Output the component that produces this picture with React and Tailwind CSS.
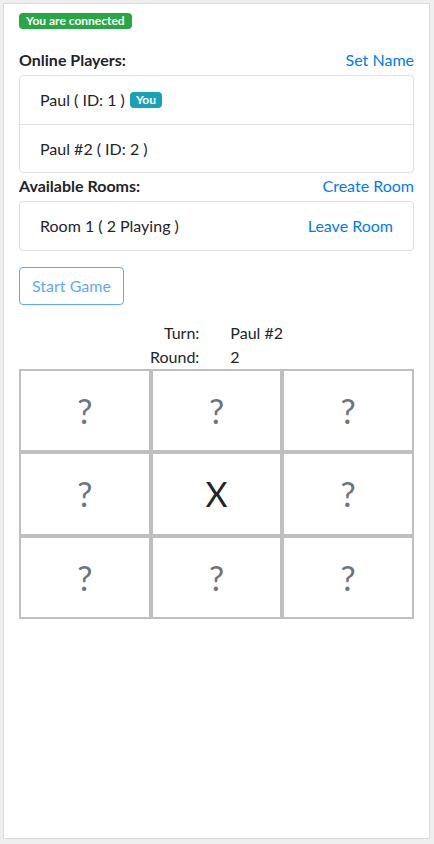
import React from 'react'

const players = [
  { name: 'Paul', id: 1, you: true },
  { name: 'Paul #2', id: 2, you: false },
]

const board = ['?', '?', '?', '?', 'X', '?', '?', '?', '?']

export default function App() {
  return (
    <div
      className="h-screen bg-[#efefef] pt-[3px] pl-[3px] pr-[4px] pb-[5px] text-[#212529] text-[16px]"
      style={{ fontFamily: 'Lato, "Noto Sans", sans-serif' }}
    >
      <div className="h-full bg-white border border-[#dcdcdc] px-[15px] pt-[9px]">
        {/* Status */}
        <div className="w-fit h-[16px] flex items-center bg-[#28a745] text-white text-[12px] font-bold leading-none px-[7px] rounded-[4px]">
          You are connected
        </div>

        {/* Players */}
        <div className="mt-[19px] flex justify-between h-[27px] leading-[24px]">
          <span className="font-bold">Online Players:</span>
          <a className="text-[#007bff] cursor-pointer">Set Name</a>
        </div>
        <div className="border border-[#dfdfdf] rounded-[4px]">
          {players.map((p, i) => (
            <div
              key={p.id}
              className={`h-[48px] px-[20px] flex items-center ${i > 0 ? 'border-t border-[#dfdfdf]' : ''}`}
            >
              <span>{p.name} ( ID: {p.id} )</span>
              {p.you && (
                <span className="ml-[5px] h-[16px] flex items-center bg-[#17a2b8] text-white text-[12px] font-bold leading-none px-[6px] rounded-[4px]">
                  You
                </span>
              )}
            </div>
          ))}
        </div>

        {/* Rooms */}
        <div className="flex justify-between h-[28px] pt-[1px] leading-[24px]">
          <span className="font-bold">Available Rooms:</span>
          <a className="text-[#007bff] cursor-pointer">Create Room</a>
        </div>
        <div className="border border-[#dfdfdf] rounded-[4px]">
          <div className="h-[48px] px-[20px] flex items-center justify-between">
            <span>Room 1 ( 2 Playing )</span>
            <a className="text-[#007bff] cursor-pointer">Leave Room</a>
          </div>
        </div>

        <button
          disabled
          className="mt-[16px] h-[38px] px-[12px] border border-[#007bff] text-[#007bff] rounded-[4px] opacity-65"
        >
          Start Game
        </button>

        {/* Turn info */}
        <div className="mt-[16px] flex justify-center">
          <div className="grid grid-cols-[auto_auto] gap-x-[31px] leading-[24px]">
            <span className="text-right">Turn:</span>
            <span>Paul #2</span>
            <span className="text-right">Round:</span>
            <span>2</span>
          </div>
        </div>

        {/* Board */}
        <div className="grid grid-cols-3 grid-rows-3 h-[250px]">
          {board.map((c, i) => (
            <div
              key={i}
              className={`border-2 border-[#bfbfbf] flex items-center justify-center text-[34px] ${c === 'X' ? 'text-[#212529]' : 'text-[#6c757d]'}`}
            >
              {c}
            </div>
          ))}
        </div>
      </div>
    </div>
  )
}
